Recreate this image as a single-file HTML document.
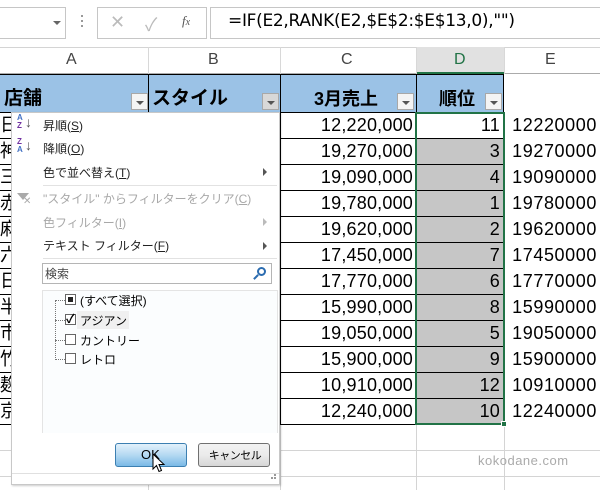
<!DOCTYPE html>
<html><head><meta charset="utf-8"><style>
*{box-sizing:border-box;margin:0;padding:0}
body{width:600px;height:490px;overflow:hidden;background:#fff;position:relative;font-family:"Liberation Sans","Noto Sans CJK JP",sans-serif;color:#000}
.a{position:absolute}
.hl{position:absolute;height:1px;background:#000}
.vl{position:absolute;width:1px;background:#000}
.gh{position:absolute;height:1px;background:#d4d4d4}
.gv{position:absolute;width:1px;background:#d4d4d4}
.num{position:absolute;font-size:18px;text-align:right;line-height:26px;font-family:"Liberation Sans",sans-serif;letter-spacing:0.2px}
.btn{position:absolute;width:17px;height:17px;background:#f4f4f4;border:1px solid #a8a8a8}
.btn:after{content:"";position:absolute;left:4px;top:7px;border-left:4px solid transparent;border-right:4px solid transparent;border-top:4px solid #555}
.mi{position:absolute;left:43px;font-size:12px;color:#222}
.dis{color:#a8a8a8}
.arr{position:absolute;left:263px;border-top:4px solid transparent;border-bottom:4px solid transparent;border-left:4px solid #555}
.cb{position:absolute;width:11px;height:11px;border:1px solid #666;background:#fff}
.li{position:absolute;font-size:12px;left:80px}
</style></head><body>
<div class="a" style="left:0;top:0;width:600px;height:46px;background:#fff"></div>
<div class="a" style="left:-2px;top:7px;width:68px;height:32px;border:1px solid #c6c6c6"></div>
<div class="a" style="left:53px;top:21px;border-left:4px solid transparent;border-right:4px solid transparent;border-top:4px solid #666"></div>
<div class="a" style="left:81px;top:15px;width:2px;height:2px;background:#999;box-shadow:0 5px #999,0 10px #999"></div>
<div class="a" style="left:97px;top:7px;width:110px;height:32px;border:1px solid #c6c6c6"></div>
<div class="a" style="left:110px;top:12px;font-size:18px;color:#bbb">✕</div>
<div class="a" style="left:145px;top:11px;font-size:18px;color:#bbb">✓</div>
<div class="a" style="left:182px;top:13px;font-size:13px;font-style:italic;font-family:'Liberation Serif',serif;color:#555">f<span style="font-size:10px">x</span></div>
<div class="a" style="left:210px;top:7px;width:400px;height:32px;border:1px solid #c6c6c6"></div>
<div class="a" style="left:228px;top:11px;font-size:17px;font-family:'DejaVu Sans',sans-serif;letter-spacing:-0.3px">=IF(E2,RANK(E2,$E$2:$E$13,0),"")</div>
<div class="a" style="left:0;top:47px;width:600px;height:27px;background:#fff;border-top:1px solid #d4d4d4;border-bottom:1px solid #ababab"></div>
<div class="a" style="left:416px;top:47px;width:88px;height:27px;background:#e1e1e1;border-bottom:2px solid #217346"></div>
<div class="gv" style="left:148px;top:47px;height:27px;background:#d8d8d8"></div>
<div class="gv" style="left:280px;top:47px;height:27px;background:#d8d8d8"></div>
<div class="gv" style="left:416px;top:47px;height:27px;background:#d8d8d8"></div>
<div class="gv" style="left:504px;top:47px;height:27px;background:#d8d8d8"></div>
<div class="a" style="left:66px;top:51px;font-size:16px;color:#444">A</div>
<div class="a" style="left:208px;top:51px;font-size:16px;color:#444">B</div>
<div class="a" style="left:341px;top:51px;font-size:16px;color:#444">C</div>
<div class="a" style="left:454px;top:51px;font-size:16px;color:#217346">D</div>
<div class="a" style="left:545px;top:51px;font-size:16px;color:#444">E</div>
<div class="a" style="left:0;top:74px;width:504px;height:38px;background:#9bc2e6"></div>
<div class="a" style="left:4px;top:83px;font-size:19px;font-weight:bold">店舗</div>
<div class="a" style="left:152px;top:83px;font-size:19px;font-weight:bold">スタイル</div>
<div class="a" style="left:314px;top:85px;font-size:18px;font-weight:bold">3月売上</div>
<div class="a" style="left:439px;top:85px;font-size:18px;font-weight:bold">順位</div>
<div class="btn" style="left:131px;top:93px"></div>
<div class="btn" style="left:262px;top:93px;background:#d8d8d8"></div>
<div class="btn" style="left:397px;top:93px"></div>
<div class="btn" style="left:485px;top:93px"></div>
<div class="gh" style="left:0;top:450px;width:600px"></div>
<div class="gh" style="left:0;top:476px;width:600px"></div>
<div class="gv" style="left:148px;top:424px;height:66px"></div>
<div class="gv" style="left:280px;top:424px;height:66px"></div>
<div class="gv" style="left:416px;top:424px;height:66px"></div>
<div class="gv" style="left:504px;top:424px;height:66px"></div>
<div class="gv" style="left:504px;top:112px;height:312px"></div>
<div class="a" style="left:417px;top:138px;width:87px;height:286px;background:#c6c6c6"></div>
<div class="hl" style="left:0;top:74px;width:504px"></div>
<div class="hl" style="left:0;top:112px;width:504px"></div>
<div class="hl" style="left:0;top:138px;width:504px"></div>
<div class="hl" style="left:0;top:164px;width:504px"></div>
<div class="hl" style="left:0;top:190px;width:504px"></div>
<div class="hl" style="left:0;top:216px;width:504px"></div>
<div class="hl" style="left:0;top:242px;width:504px"></div>
<div class="hl" style="left:0;top:268px;width:504px"></div>
<div class="hl" style="left:0;top:294px;width:504px"></div>
<div class="hl" style="left:0;top:320px;width:504px"></div>
<div class="hl" style="left:0;top:346px;width:504px"></div>
<div class="hl" style="left:0;top:372px;width:504px"></div>
<div class="hl" style="left:0;top:398px;width:504px"></div>
<div class="hl" style="left:0;top:424px;width:504px"></div>
<div class="vl" style="left:148px;top:74px;height:38px"></div>
<div class="vl" style="left:280px;top:74px;height:350px"></div>
<div class="vl" style="left:416px;top:74px;height:350px"></div>
<div class="vl" style="left:503px;top:74px;height:350px"></div>
<div class="a" style="left:415px;top:112px;width:90px;height:313px;border:2px solid #217346"></div>
<div class="a" style="left:501px;top:421px;width:6px;height:6px;background:#217346;border:1px solid #fff"></div>
<div class="a" style="left:0;top:112px;width:11px;height:312px;overflow:hidden;font-size:18px;line-height:26px">日<br>神<br>三<br>赤<br>麻<br>六<br>日<br>半<br>市<br>竹<br>麹<br>京</div>
<div class="num" style="left:281px;top:112px;width:132px">12,220,000<br>19,270,000<br>19,090,000<br>19,780,000<br>19,620,000<br>17,450,000<br>17,770,000<br>15,990,000<br>19,050,000<br>15,900,000<br>10,910,000<br>12,240,000</div>
<div class="num" style="left:417px;top:112px;width:83px">11<br>3<br>4<br>1<br>2<br>7<br>6<br>8<br>5<br>9<br>12<br>10</div>
<div class="num" style="left:505px;top:112px;width:92px;letter-spacing:0.6px">12220000<br>19270000<br>19090000<br>19780000<br>19620000<br>17450000<br>17770000<br>15990000<br>19050000<br>15900000<br>10910000<br>12240000</div>
<div class="a" style="left:478px;top:453px;font-size:13px;color:#aaa;letter-spacing:0.5px">kokodane.com</div>
<div class="a" style="left:11px;top:112px;width:269px;height:373px;background:#fff;border:1px solid #c8c8c8;box-shadow:1px 1px 2px rgba(0,0,0,.2)"></div>
<div class="a" style="left:17px;top:114px;font-size:8px;line-height:8px;color:#4472c4;font-weight:bold">A<br><span style="color:#7030a0">Z</span></div>
<div class="a" style="left:25px;top:114px;font-size:14px;color:#555">↓</div>
<div class="a" style="left:17px;top:138px;font-size:8px;line-height:8px;color:#7030a0;font-weight:bold">Z<br><span style="color:#4472c4">A</span></div>
<div class="a" style="left:25px;top:137px;font-size:14px;color:#555">↓</div>
<div class="mi" style="top:117px">昇順(<u>S</u>)</div>
<div class="mi" style="top:140px">降順(<u>O</u>)</div>
<div class="mi" style="top:164px">色で並べ替え(<u>T</u>)</div>
<div class="arr" style="top:168px"></div>
<div class="a" style="left:43px;top:185px;width:234px;height:1px;background:#e2e2e2"></div>
<div class="a" style="left:17px;top:193px;border-left:6px solid transparent;border-right:6px solid transparent;border-top:7px solid #aaa"></div>
<div class="a" style="left:23px;top:196px;font-size:10px;color:#aaa">✕</div>
<div class="mi dis" style="top:190px">"スタイル" からフィルターをクリア(<u>C</u>)</div>
<div class="mi dis" style="top:214px">色フィルター(<u>I</u>)</div>
<div class="arr" style="top:218px;border-left-color:#bbb"></div>
<div class="mi" style="top:237px">テキスト フィルター(<u>F</u>)</div>
<div class="arr" style="top:242px"></div>
<div class="a" style="left:43px;top:258px;width:234px;height:1px;background:#e2e2e2"></div>
<div class="a" style="left:42px;top:263px;width:230px;height:21px;border:1px solid #b5b5b5"></div>
<div class="a" style="left:45px;top:265px;font-size:12px;color:#444">検索</div>
<div class="a" style="left:257px;top:267px;width:9px;height:9px;border:2px solid #2b6cb0;border-radius:50%"></div>
<div class="a" style="left:253px;top:276px;width:6px;height:2px;background:#2b6cb0;transform:rotate(-45deg)"></div>
<div class="a" style="left:42px;top:290px;width:236px;height:143px;border:1px solid #e4e4e4;border-bottom:none;background:#fbfdfe"></div>
<div class="a" style="left:55px;top:300px;width:1px;height:60px;border-left:1px dotted #777"></div>
<div class="a" style="left:55px;top:300px;width:10px;border-top:1px dotted #777"></div>
<div class="a" style="left:55px;top:320px;width:10px;border-top:1px dotted #777"></div>
<div class="a" style="left:55px;top:340px;width:10px;border-top:1px dotted #777"></div>
<div class="a" style="left:55px;top:359px;width:10px;border-top:1px dotted #777"></div>
<div class="a" style="left:77px;top:311px;width:52px;height:18px;background:#f0f0f0"></div>
<div class="cb" style="left:65px;top:294px"><div style="margin:2px;width:5px;height:5px;background:#222"></div></div>
<div class="cb" style="left:65px;top:314px"><div style="position:absolute;left:0px;top:-5px;font-size:12px;font-weight:bold">✓</div></div>
<div class="cb" style="left:65px;top:334px"></div>
<div class="cb" style="left:65px;top:353px"></div>
<div class="li" style="top:292px">(すべて選択)</div>
<div class="li" style="top:312px">アジアン</div>
<div class="li" style="top:332px">カントリー</div>
<div class="li" style="top:351px">レトロ</div>
<div class="a" style="left:115px;top:443px;width:72px;height:24px;border:1px solid #3c7fb1;border-radius:3px;background:linear-gradient(#e3f1fb,#b5d9f2 50%,#7ab9e6);"></div>
<div class="a" style="left:141px;top:447px;font-size:13px">OK</div>
<svg class="a" style="left:152px;top:453px" width="14" height="22" viewBox="0 0 14 22"><path d="M1 1 L1 16 L4.5 12.5 L7 18.5 L9.5 17.5 L7 11.5 L12 11.5 Z" fill="#fff" stroke="#000" stroke-width="1"/></svg>
<div class="a" style="left:198px;top:443px;width:72px;height:24px;border:1px solid #707070;border-radius:3px;background:linear-gradient(#f2f2f2,#ebebeb 50%,#d6d6d6)"></div>
<div class="a" style="left:206px;top:447px;width:58px;text-align:center;font-size:11px;letter-spacing:-0.5px">キャンセル</div>
<div class="a" style="left:12px;top:473px;width:267px;height:1px;background:#e0e0e0"></div>
<div class="a" style="left:271px;top:477px;width:2px;height:2px;background:#999;box-shadow:3px 0 #999,3px -3px #999"></div>
</body></html>
